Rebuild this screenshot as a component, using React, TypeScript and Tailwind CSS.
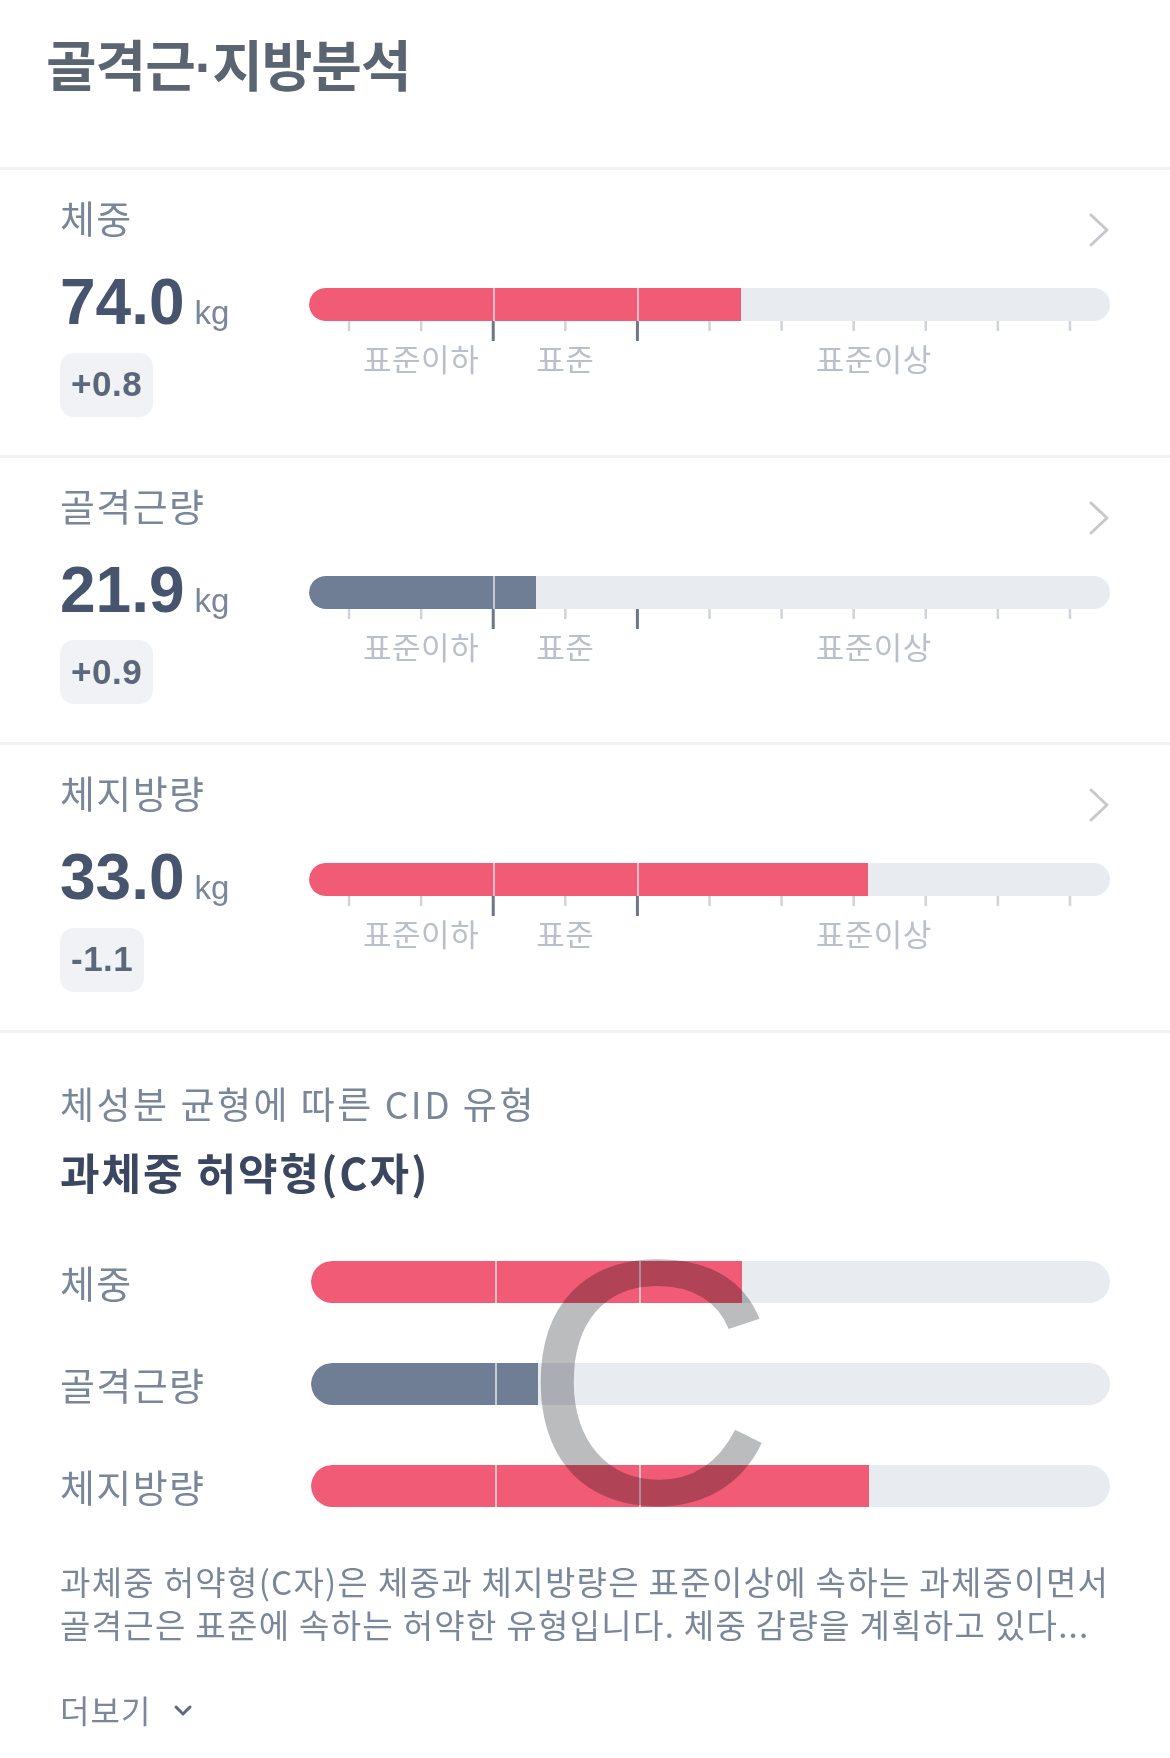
import React from "react";

type Item = { label: string; value: string; delta: string; fill: number; color: "red" | "slate" };

const items: Item[] = [
  { label: "체중", value: "74.0", delta: "+0.8", fill: 53.9, color: "red" },
  { label: "골격근량", value: "21.9", delta: "+0.9", fill: 28.4, color: "slate" },
  { label: "체지방량", value: "33.0", delta: "-1.1", fill: 69.8, color: "red" },
];

function Bar({ fill, color, tall }: { fill: number; color: "red" | "slate"; tall?: boolean }) {
  return (
    <div className={`relative overflow-hidden rounded-full bg-[#e8ebf0] ${tall ? "h-[42px]" : "h-[33px]"}`}>
      <div
        className={`h-full rounded-l-full ${color === "red" ? "bg-[#f15b75]" : "bg-[#6f7e94]"}`}
        style={{ width: `${fill}%` }}
      />
      {[23, 41].map((p) =>
        p < fill ? (
          <div key={p} className="absolute inset-y-0 w-[2px] bg-white/60" style={{ left: `${p}%` }} />
        ) : null
      )}
    </div>
  );
}

function Scale() {
  const ticks = Array.from({ length: 11 }, (_, k) => k);
  return (
    <>
      <svg className="block h-[20px] w-full" aria-hidden>
        {ticks.map((k) => {
          const x = `${5 + 9 * k}%`;
          const major = k === 2 || k === 4;
          return (
            <line
              key={k}
              x1={x}
              x2={x}
              y1={0}
              y2={major ? 20 : 10}
              stroke={major ? "#6b778a" : "#cfd3da"}
              strokeWidth={major ? 3 : 2.5}
            />
          );
        })}
      </svg>
      <div className="grid grid-cols-[5%_18%_18%_59%] text-[31px] leading-[34px] tracking-[0.5px] text-[#b9c0cb]">
        <div />
        <div className="text-center">표준이하</div>
        <div className="text-center">표준</div>
        <div className="text-center">표준이상</div>
      </div>
    </>
  );
}

function Divider() {
  return <div className="h-[3px] bg-[#f2f3f6]" />;
}

function Section({ item }: { item: Item }) {
  return (
    <div className="px-[60px] pt-[24px] pb-[38px]">
      <div className="flex h-[46px] items-start justify-between">
        <div className="text-[38px] leading-[46px] tracking-[1.4px] text-[#7a8699]">{item.label}</div>
        <svg className="mt-[18px] h-[36px] w-[22px]" viewBox="0 0 22 36" fill="none" aria-hidden>
          <polyline points="3,3 19,18 3,33" stroke="#c6c8cc" strokeWidth="3" strokeLinejoin="round" strokeLinecap="round" />
        </svg>
      </div>
      <div className="mt-[30px] flex items-start">
        <div className="w-[249px] shrink-0">
          <div className="flex items-baseline gap-[10px] font-['Liberation_Sans',Arial,sans-serif]">
            <span className="text-[64px] leading-[64px] font-bold text-[#47546e]">{item.value}</span>
            <span className="text-[33px] text-[#7a8699]">kg</span>
          </div>
          <div className="mt-[15px] inline-flex h-[64px] items-center rounded-[14px] bg-[#f0f2f5] px-[11px] font-['Liberation_Sans',Arial,sans-serif] text-[35px] font-bold tracking-[0.5px] text-[#5c677a]">
            {item.delta}
          </div>
        </div>
        <div className="flex-1 pt-[18px]">
          <Bar fill={item.fill} color={item.color} />
          <Scale />
        </div>
      </div>
    </div>
  );
}

export default function App() {
  return (
    <div className="min-h-[1758px] w-[1170px] bg-white font-['Noto_Sans_CJK_KR','Noto_Sans',sans-serif]">
      <div className="px-[46px] pt-[27px] pb-[70px]">
        <h1 className="h-[70px] text-[55px] leading-[70px] font-bold tracking-[-1px] text-[#5b6471]">
          골격근<span className="font-['Liberation_Sans',Arial,sans-serif] leading-none">·</span>지방분석
        </h1>
      </div>
      <Divider />
      {items.map((it) => (
        <React.Fragment key={it.label}>
          <Section item={it} />
          <Divider />
        </React.Fragment>
      ))}
      <div className="px-[60px] pt-[48px]">
        <div className="text-[37px] leading-[44px] tracking-[2.5px] text-[#7a8699]">체성분 균형에 따른 CID 유형</div>
        <div className="mt-[21px] text-[43px] leading-[50px] font-bold tracking-[2px] text-[#3b4660]">과체중 허약형(C자)</div>
        <div className="relative mt-[65px] flex flex-col gap-[60px]">
          {items.map((it) => (
            <div key={it.label} className="flex h-[42px] items-center">
              <div className="w-[251px] shrink-0 text-[38px] leading-[44px] tracking-[1.4px] text-[#7a8699]">{it.label}</div>
              <div className="flex-1">
                <Bar fill={it.fill} color={it.color} tall />
              </div>
            </div>
          ))}
          <div className="pointer-events-none absolute left-[463px] top-[-53px] font-['Liberation_Sans',Arial,sans-serif] text-[349px] leading-[349px] text-[#bbbcbe] mix-blend-multiply">
            C
          </div>
        </div>
        <div className="mt-[53px] text-[33px] leading-[43px] tracking-[1.3px] text-[#7a869a]">
          <div className="whitespace-nowrap">과체중 허약형(C자)은 체중과 체지방량은 표준이상에 속하는 과체중이면서</div>
          <div className="whitespace-nowrap">골격근은 표준에 속하는 허약한 유형입니다. 체중 감량을 계획하고 있다...</div>
        </div>
        <div className="mt-[45px] flex items-center text-[32px] leading-[36px] tracking-[1px] text-[#7a869a]">
          <span>더보기</span>
          <svg className="ml-[22px] mt-[4px] h-[13px] w-[20px]" viewBox="0 0 20 13" fill="none" aria-hidden>
            <polyline points="3,3 10,10 17,3" stroke="#5f6b7c" strokeWidth="3" strokeLinecap="round" strokeLinejoin="round" />
          </svg>
        </div>
      </div>
    </div>
  );
}
